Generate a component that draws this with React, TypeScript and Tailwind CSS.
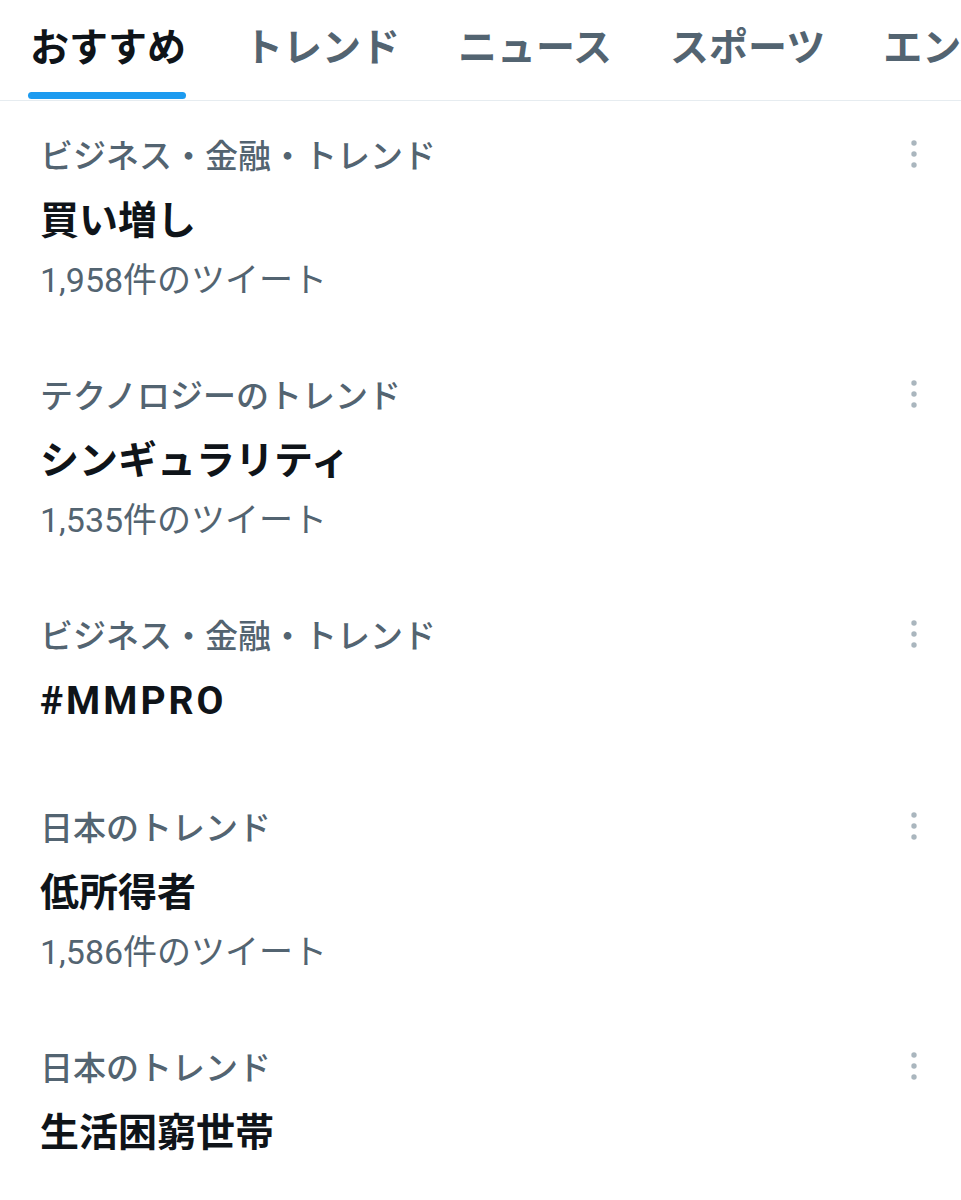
import React from 'react';

interface Trend {
  category: string;
  title: string;
  count?: string;
  latin?: boolean;
}

const tabs = ['おすすめ', 'トレンド', 'ニュース', 'スポーツ', 'エン'];

const trends: Trend[] = [
  { category: 'ビジネス・金融・トレンド', title: '買い増し', count: '1,958件のツイート' },
  { category: 'テクノロジーのトレンド', title: 'シンギュラリティ', count: '1,535件のツイート' },
  { category: 'ビジネス・金融・トレンド', title: '#MMPRO', latin: true },
  { category: '日本のトレンド', title: '低所得者', count: '1,586件のツイート' },
  { category: '日本のトレンド', title: '生活困窮世帯' },
];

const MoreIcon = () => (
  <svg width="10" height="32" viewBox="0 0 10 32" className="shrink-0 mt-[3px]">
    <circle cx="5" cy="5" r="2.7" fill="#aab6be" />
    <circle cx="5" cy="16" r="2.7" fill="#aab6be" />
    <circle cx="5" cy="27" r="2.7" fill="#aab6be" />
  </svg>
);

export default function App() {
  return (
    <div className="w-[961px] h-[1200px] overflow-hidden bg-white font-['Roboto','Noto_Sans_CJK_JP',sans-serif]">
      <div className="h-[101px] border-b border-[#e6ecf0] overflow-hidden">
        <div className="flex gap-[58px] pl-[30px] whitespace-nowrap">
          {tabs.map((tab, i) => (
            <div key={tab} className="flex flex-col pt-[20px] shrink-0">
              <span
                className={
                  i === 0
                    ? 'text-[39px] leading-[56px] font-bold text-[#0f1419]'
                    : 'text-[39px] leading-[56px] font-bold text-[#536471]'
                }
              >
                {tab}
              </span>
              <div
                className={
                  i === 0
                    ? 'mt-[16px] h-[7px] -ml-[2px] rounded-full bg-[#1d9bf0]'
                    : 'mt-[16px] h-[7px]'
                }
              />
            </div>
          ))}
        </div>
      </div>

      {trends.map((trend, i) => (
        <div key={i} className="flex items-start pl-[40px] pr-[42px] pt-[34px] pb-[37px]">
          <div className="flex-1 min-w-0">
            <div className="text-[33px] leading-[44px] font-medium text-[#536471]">{trend.category}</div>
            <div
              className={
                trend.latin
                  ? 'mt-[7px] text-[39px] leading-[70px] font-bold tracking-[3px] text-[#0f1419]'
                  : 'mt-[7px] text-[39px] leading-[70px] font-bold text-[#0f1419]'
              }
            >
              {trend.title}
            </div>
            {trend.count && (
              <div className="text-[34px] leading-[48px] text-[#536471]">{trend.count}</div>
            )}
          </div>
          <MoreIcon />
        </div>
      ))}
    </div>
  );
}
